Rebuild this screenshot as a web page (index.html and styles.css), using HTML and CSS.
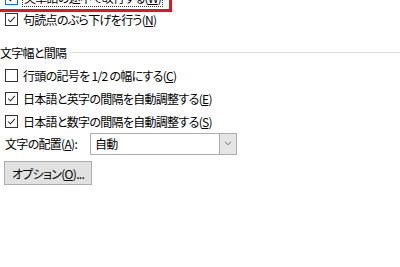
FILE: index.html
```html
<!DOCTYPE html>
<html lang="ja">
<head>
<meta charset="utf-8">
<link rel="stylesheet" href="styles.css">
</head>
<body>
<div class="page">
  <div class="group top">
    <div class="row focus-row">
      <span class="cb cb-focus checked"><svg viewBox="0 0 13 13"><path d="M2.5 6.5 L5.2 9.2 L10.5 3.5" /></svg></span>
      <span class="label dotted">英単語の途中で改行する(<u>W</u>)</span>
    </div>
    <div class="row">
      <span class="cb checked"><svg viewBox="0 0 13 13"><path d="M2.5 6.5 L5.2 9.2 L10.5 3.5" /></svg></span>
      <span class="label">句読点のぶら下げを行う(<u>N</u>)</span>
    </div>
    <div class="highlight"></div>
  </div>

  <div class="section-head">
    <span class="section-title">文字幅と間隔</span>
    <span class="section-line"></span>
  </div>

  <div class="group">
    <div class="row">
      <span class="cb"></span>
      <span class="label">行頭の記号を 1/2 の幅にする(<u>C</u>)</span>
    </div>
    <div class="row">
      <span class="cb checked"><svg viewBox="0 0 13 13"><path d="M2.5 6.5 L5.2 9.2 L10.5 3.5" /></svg></span>
      <span class="label">日本語と英字の間隔を自動調整する(<u>E</u>)</span>
    </div>
    <div class="row">
      <span class="cb checked"><svg viewBox="0 0 13 13"><path d="M2.5 6.5 L5.2 9.2 L10.5 3.5" /></svg></span>
      <span class="label">日本語と数字の間隔を自動調整する(<u>S</u>)</span>
    </div>
  </div>

  <div class="align-row">
    <span class="align-label">文字の配置(<u>A</u>):</span>
    <div class="select">
      <span class="select-value">自動</span>
      <span class="select-btn"><svg viewBox="0 0 9 6"><path d="M1 1 L4.5 4.5 L8 1" /></svg></span>
    </div>
  </div>

  <button class="btn" type="button">オプション(<u>O</u>)...</button>
</div>
</body>
</html>
```
FILE: styles.css
```css
html, body {
  margin: 0;
  padding: 0;
  background: #ffffff;
}
body {
  font-family: "Noto Sans CJK JP", "Noto Sans", sans-serif;
  font-size: 12px;
  letter-spacing: -0.7px;
  color: #000000;
  font-feature-settings: "palt";
  overflow: hidden;
  width: 400px;
  height: 267px;
}
u {
  text-decoration: underline;
  text-underline-offset: 1px;
}
.page {
  display: flex;
  flex-direction: column;
}
.group {
  display: flex;
  flex-direction: column;
}
.top {
  position: relative;
  margin-top: -12px;
}
.row {
  display: flex;
  align-items: center;
  height: 23px;
  padding-left: 5px;
  gap: 5px;
}
.focus-row {
  height: 20px;
}
.cb {
  width: 11px;
  height: 11px;
  border: 1px solid #333333;
  background: #fff;
  flex: none;
  display: flex;
  align-items: center;
  justify-content: center;
}
.cb svg {
  width: 11px;
  height: 11px;
}
.cb path {
  fill: none;
  stroke: #222;
  stroke-width: 1.2;
}
.cb-focus {
  border-color: #0078d7;
}
.label {
  line-height: 16px;
  white-space: nowrap;
}
.dotted {
  outline: 1px dotted #333;
  padding: 0 1px;
}
.highlight {
  position: absolute;
  left: -10px;
  top: -10px;
  width: 182px;
  height: 34px;
  border: 3px solid #e8141c;
  box-sizing: border-box;
  border-left-width: 0;
}
.section-head {
  display: flex;
  align-items: center;
  margin-top: 13px;
  height: 16px;
  gap: 4px;
}
.section-title {
  white-space: nowrap;
}
.section-line {
  flex: 1;
  height: 1px;
  background: #dcdcdc;
}
.section-head + .group {
  margin-top: 4px;
}
.align-row {
  display: flex;
  align-items: center;
  padding-left: 5px;
  height: 21px;
}
.align-label {
  width: 85px;
  white-space: nowrap;
}
.select {
  width: 147px;
  height: 22px;
  box-sizing: border-box;
  border: 1px solid #adadad;
  display: flex;
  align-items: stretch;
  background: #fff;
  flex: none;
}
.select-value {
  flex: 1;
  padding-left: 4px;
  display: flex;
  align-items: center;
}
.select-btn {
  width: 16px;
  background: #e5e5e5;
  border-left: 1px solid #adadad;
  display: flex;
  align-items: center;
  justify-content: center;
}
.select-btn svg {
  width: 8px;
  height: 5px;
}
.select-btn path {
  fill: none;
  stroke: #555;
  stroke-width: 1;
}
.btn {
  align-self: flex-start;
  margin-left: 4px;
  margin-top: 7px;
  width: 88px;
  height: 24px;
  background: #e1e1e1;
  border: 1px solid #adadad;
  font-family: inherit;
  font-size: 12px;
  letter-spacing: -0.7px;
  font-feature-settings: "palt";
  color: #000;
  padding: 0;
}
```
